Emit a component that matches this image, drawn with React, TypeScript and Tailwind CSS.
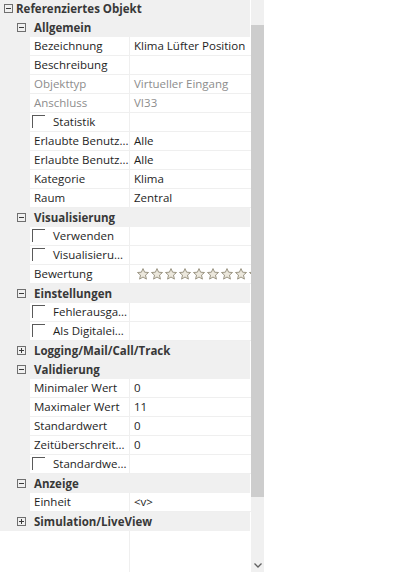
type Row =
  | { kind: "cat"; label: string; level: 0 | 1; open: boolean }
  | { kind: "prop"; label: string; value?: string; disabled?: boolean; check?: boolean; stars?: boolean };

const rows: Row[] = [
  { kind: "cat", label: "Referenziertes Objekt", level: 0, open: true },
  { kind: "cat", label: "Allgemein", level: 1, open: true },
  { kind: "prop", label: "Bezeichnung", value: "Klima Lüfter Position" },
  { kind: "prop", label: "Beschreibung" },
  { kind: "prop", label: "Objekttyp", value: "Virtueller Eingang", disabled: true },
  { kind: "prop", label: "Anschluss", value: "VI33", disabled: true },
  { kind: "prop", label: "Statistik", check: true },
  { kind: "prop", label: "Erlaubte Benutz...", value: "Alle" },
  { kind: "prop", label: "Erlaubte Benutz...", value: "Alle" },
  { kind: "prop", label: "Kategorie", value: "Klima" },
  { kind: "prop", label: "Raum", value: "Zentral" },
  { kind: "cat", label: "Visualisierung", level: 1, open: true },
  { kind: "prop", label: "Verwenden", check: true },
  { kind: "prop", label: "Visualisieru...", check: true },
  { kind: "prop", label: "Bewertung", stars: true },
  { kind: "cat", label: "Einstellungen", level: 1, open: true },
  { kind: "prop", label: "Fehlerausga...", check: true },
  { kind: "prop", label: "Als Digitalei...", check: true },
  { kind: "cat", label: "Logging/Mail/Call/Track", level: 1, open: false },
  { kind: "cat", label: "Validierung", level: 1, open: true },
  { kind: "prop", label: "Minimaler Wert", value: "0" },
  { kind: "prop", label: "Maximaler Wert", value: "11" },
  { kind: "prop", label: "Standardwert", value: "0" },
  { kind: "prop", label: "Zeitüberschreit...", value: "0" },
  { kind: "prop", label: "Standardwe...", check: true },
  { kind: "cat", label: "Anzeige", level: 1, open: true },
  { kind: "prop", label: "Einheit", value: "<v>" },
  { kind: "cat", label: "Simulation/LiveView", level: 1, open: false },
];

function ExpandBox({ open }: { open: boolean }) {
  return (
    <svg width="9" height="9" viewBox="0 0 9 9" className="shrink-0">
      <rect x="0.5" y="0.5" width="8" height="8" fill="none" stroke="#6f6f6f" />
      <line x1="2" y1="4.5" x2="7" y2="4.5" stroke="#3a3a3a" />
      {!open && <line x1="4.5" y1="2" x2="4.5" y2="7" stroke="#3a3a3a" />}
    </svg>
  );
}

function Star() {
  return (
    <svg width="12" height="12" viewBox="0 0 12 12" className="shrink-0">
      <path
        d="M6 0.6 L7.6 4.2 L11.5 4.5 L8.5 7.1 L9.4 11.1 L6 9 L2.6 11.1 L3.5 7.1 L0.5 4.5 L4.4 4.2 Z"
        fill="#ece8dd"
        stroke="#9a9482"
        strokeWidth="1"
        strokeLinejoin="round"
      />
    </svg>
  );
}

function GridRow({ row }: { row: Row }) {
  if (row.kind === "cat") {
    return (
      <div className="mr-px flex h-[19px] shrink-0 items-center bg-[#f0f0f0]">
        {row.level === 0 ? (
          <>
            <div className="ml-[4px]">
              <ExpandBox open={row.open} />
            </div>
            <span className="ml-[3px] whitespace-nowrap font-bold text-[#383838]">{row.label}</span>
          </>
        ) : (
          <>
            <div className="ml-[17px]">
              <ExpandBox open={row.open} />
            </div>
            <span className="ml-[8px] whitespace-nowrap font-bold text-[#383838]">{row.label}</span>
          </>
        )}
      </div>
    );
  }
  const color = row.disabled ? "text-[#8d8d8d]" : "text-[#1e1e1e]";
  return (
    <div className="flex h-[19px] shrink-0">
      <div className="w-[30px] shrink-0 bg-[#f0f0f0]" />
      <div className={`flex w-[99px] shrink-0 items-center overflow-hidden whitespace-nowrap border-b border-[#efefef] ${color}`}>
        {row.check ? (
          <>
            <div className="mb-[1px] ml-[2px] h-[13px] w-[13px] shrink-0 border-l border-t border-[#5a5a5a]" />
            <span className="ml-[8px]">{row.label}</span>
          </>
        ) : (
          <span className="ml-[4px]">{row.label}</span>
        )}
      </div>
      <div className={`flex flex-1 items-center overflow-hidden whitespace-nowrap border-b border-l border-[#efefef] ${color}`}>
        {row.stars ? (
          <div className="ml-[7px] flex gap-[2px]">
            {Array.from({ length: 9 }).map((_, i) => (
              <Star key={i} />
            ))}
          </div>
        ) : (
          <span className="ml-[4px]">{row.value}</span>
        )}
      </div>
    </div>
  );
}

export default function App() {
  return (
    <div className="flex h-[572px] w-[412px] overflow-hidden bg-white font-['Segoe_UI','Open_Sans',sans-serif] text-[11.5px] leading-none">
      {/* property grid */}
      <div className="flex w-[251px] shrink-0 flex-col overflow-hidden">
        <div className="-mt-[1px] flex flex-col">
          {rows.map((r, i) => (
            <GridRow key={i} row={r} />
          ))}
        </div>
        <div className="ml-[129px] flex-1 border-l border-[#efefef]" />
      </div>

      {/* scrollbar */}
      <div className="flex w-[13px] shrink-0 flex-col bg-[#f0f0f0]">
        <div className="h-[25px]" />
        <div className="h-[472px] bg-[#cdcdcd]" />
        <div className="flex-1" />
        <div className="flex h-[14px] items-center justify-center">
          <svg width="8" height="5" viewBox="0 0 8 5">
            <path d="M0.5 0.5 L4 4 L7.5 0.5" fill="none" stroke="#606060" strokeWidth="1.3" />
          </svg>
        </div>
      </div>

      <div className="flex-1 bg-white" />
    </div>
  );
}
